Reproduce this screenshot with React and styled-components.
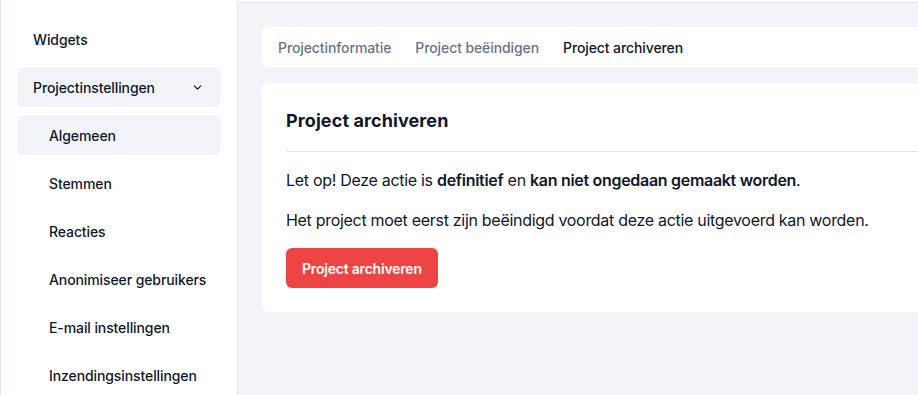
import React from "react";
import styled, { createGlobalStyle } from "styled-components";

const Global = createGlobalStyle`
  html, body { margin: 0; padding: 0; background: #ffffff; }
  body { font-family: Inter, "Noto Sans", "Liberation Sans", sans-serif; color: #0f172a; -webkit-font-smoothing: antialiased; overflow: hidden; }
  * { box-sizing: border-box; }
`;

const Layout = styled.div`
  display: flex;
  width: 918px;
  height: 395px;
  overflow: hidden;
`;

const Sidebar = styled.nav`
  flex: 0 0 238px;
  width: 238px;
  min-width: 0;
  border-left: 1px solid #e2e8f0;
  border-right: 1px solid #e2e8f0;
  background: #ffffff;
  padding: 19px 16px 0 16px;
  display: flex;
  flex-direction: column;
  gap: 8px;
`;

const NavItem = styled.div`
  height: 40px;
  display: flex;
  align-items: center;
  justify-content: space-between;
  padding-left: ${p => (p.$sub ? "32px" : "16px")};
  padding-right: 17px;
  border-radius: 6px;
  font-size: 14px;
  font-weight: 500;
  letter-spacing: -0.1px;
  color: #0f172a;
  background: ${p => (p.$active ? "#f1f5f9" : "transparent")};
  white-space: nowrap;
`;

const Main = styled.main`
  flex: 1;
  min-width: 0;
  margin-top: 2px;
  border-top: 1px solid #e2e8f0;
  background: #f1f5f9;
  padding: 24px 0 0 24px;
  overflow: hidden;
`;

const Content = styled.div`
  width: 720px;
  display: flex;
  flex-direction: column;
  gap: 16px;
`;

const TabBar = styled.div`
  height: 40px;
  background: #ffffff;
  border-radius: 6px;
  display: flex;
  align-items: center;
  gap: 24px;
  padding: 0 16px;
`;

const Tab = styled.span`
  font-size: 14px;
  font-weight: 500;
  letter-spacing: -0.1px;
  color: ${p => (p.$active ? "#0f172a" : "#64748b")};
`;

const Card = styled.section`
  background: #ffffff;
  border-radius: 6px;
  padding: 24px;
`;

const Title = styled.h2`
  margin: 0;
  font-size: 18px;
  line-height: 28px;
  font-weight: 700;
  letter-spacing: 0.1px;
  color: #0f172a;
  padding-bottom: 16px;
  border-bottom: 1px solid #e2e8f0;
`;

const Para = styled.p`
  margin: 16px 0 0 0;
  font-size: 16px;
  line-height: 24px;
  letter-spacing: -0.3px;
  color: #0f172a;
  b { font-weight: 600; }
`;

const Button = styled.button`
  margin-top: 16px;
  height: 40px;
  padding: 0 16px;
  border: none;
  border-radius: 6px;
  background: #ef4444;
  color: #ffffff;
  font-family: inherit;
  font-size: 14px;
  font-weight: 600;
  letter-spacing: -0.2px;
  cursor: pointer;
`;

const Chevron = () => (
  <svg width="13" height="13" viewBox="0 0 24 24" fill="none" stroke="#0f172a" strokeWidth="2.2" strokeLinecap="round" strokeLinejoin="round">
    <path d="M6 9l6 6 6-6" />
  </svg>
);

export default function App() {
  const subs = ["Algemeen", "Stemmen", "Reacties", "Anonimiseer gebruikers", "E-mail instellingen", "Inzendingsinstellingen"];
  return (
    <>
      <Global />
      <Layout>
        <Sidebar>
          <NavItem>Widgets</NavItem>
          <NavItem $active>
            Projectinstellingen
            <Chevron />
          </NavItem>
          {subs.map((s, i) => (
            <NavItem key={s} $sub $active={i === 0}>{s}</NavItem>
          ))}
        </Sidebar>
        <Main>
          <Content>
            <TabBar>
              <Tab>Projectinformatie</Tab>
              <Tab>Project beëindigen</Tab>
              <Tab $active>Project archiveren</Tab>
            </TabBar>
            <Card>
              <Title>Project archiveren</Title>
              <Para>
                Let op! Deze actie is <b>definitief</b> en <b>kan niet ongedaan gemaakt worden</b>.
              </Para>
              <Para>Het project moet eerst zijn beëindigd voordat deze actie uitgevoerd kan worden.</Para>
              <Button>Project archiveren</Button>
            </Card>
          </Content>
        </Main>
      </Layout>
    </>
  );
}
